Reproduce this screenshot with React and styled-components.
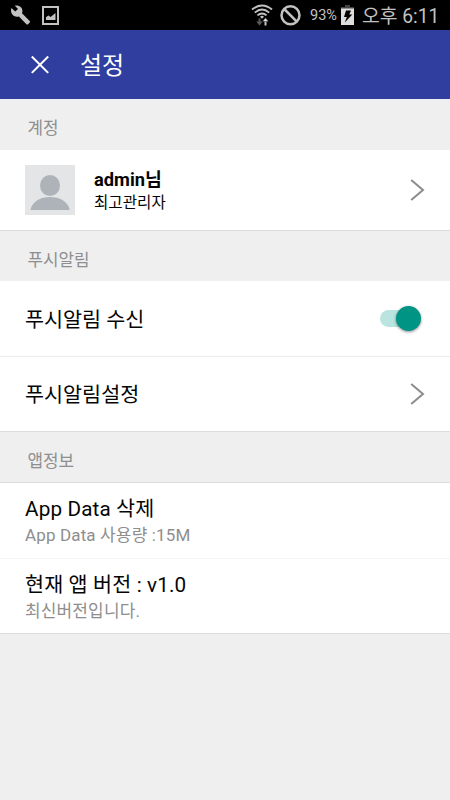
import React, { useState } from "react";
import styled, { createGlobalStyle, ThemeProvider } from "styled-components";

const theme = {
  primary: "#303f9f",
  accent: "#009485",
  accentLight: "#b9e4df",
  background: "#efefef",
  text: "#050505",
  muted: "#8e8e8e",
  status: "#c2c2c2"
};

const GlobalStyle = createGlobalStyle`
  * {
    box-sizing: border-box;
  }

  body {
    margin: 0;
    background: #efefef;
    font-family: Roboto, "Noto Sans CJK KR", sans-serif;
  }
`;

const Screen = styled.div`
  width: 450px;
  height: 800px;
  overflow: hidden;
  background: ${props => props.theme.background};
  color: ${props => props.theme.text};
`;

const StatusBar = styled.div`
  height: 30px;
  padding: 0 11px 0 10px;
  display: flex;
  align-items: center;
  justify-content: space-between;
  background: #000;
  color: ${props => props.theme.status};
`;

const StatusGroup = styled.div`
  height: 30px;
  display: flex;
  align-items: center;

  svg {
    display: block;
    flex: none;
  }
`;

const Notifications = styled(StatusGroup)`
  gap: 11px;
`;

const BlockedSlot = styled.div`
  margin-left: 7px;
`;

const Percent = styled.span`
  width: 28px;
  margin: 2px 3px 0 8px;
  font-size: 14.5px;
  line-height: 30px;
  white-space: nowrap;
`;

const Clock = styled.span`
  margin: 3px 0 0 8px;
  width: 77px;
  font-size: 19.3px;
  line-height: 30px;
  white-space: nowrap;
`;

const Toolbar = styled.header`
  height: 69px;
  padding-left: 31px;
  display: flex;
  align-items: center;
  background: ${props => props.theme.primary};
  color: #fff;
`;

const CloseButton = styled.button`
  padding: 0;
  border: 0;
  background: none;
  color: inherit;

  svg {
    display: block;
  }
`;

const Title = styled.h1`
  margin: 4px 0 0 31px;
  font-size: 24px;
  font-weight: 400;
  line-height: 69px;
`;

const SectionTitle = styled.h2`
  height: ${props => props.$height || 50}px;
  margin: 0;
  padding: 4px 0 0 27.5px;
  color: ${props => props.theme.muted};
  font-size: 16.9px;
  font-weight: 400;
  line-height: 50px;
`;

const List = styled.div`
  background: #fff;
  border-top: ${props => (props.$topLine ? "1px solid #dcdcdc" : "0")};
  border-bottom: 1px solid #dcdcdc;
`;

const Row = styled.div`
  height: ${props => props.$height || 75}px;
  padding: 0 25px;
  display: flex;
  align-items: center;
  border-top: ${props => (props.$divider ? `1px solid ${props.$divider}` : "0")};
`;

const Texts = styled.div`
  flex: 1;
  display: flex;
  flex-direction: column;
`;

const Label = styled.div`
  padding-top: ${props => (props.$spaced ? 1 : 2)}px;
  font-size: 20.7px;
  letter-spacing: ${props => (props.$spaced ? "0.14px" : "0")};
  line-height: 28px;
`;

const Description = styled.div`
  color: ${props => props.theme.muted};
  font-size: 17px;
  letter-spacing: 0.14px;
  line-height: 24px;
`;

const Avatar = styled.svg`
  display: block;
  margin-right: 19px;
`;

const UserName = styled.div`
  padding-top: 2px;
  font-size: 18.3px;
  font-weight: 700;
  line-height: 25px;
`;

const UserRole = styled.div`
  font-size: 15.6px;
  line-height: 23px;
`;

const Track = styled.button`
  width: 38px;
  height: 17px;
  margin-right: 7px;
  padding: 0;
  display: flex;
  align-items: center;
  justify-content: ${props => (props.$on ? "flex-end" : "flex-start")};
  border: 0;
  border-radius: 9px;
  background: ${props => (props.$on ? props.theme.accentLight : "#cfcfcf")};
`;

const Thumb = styled.span`
  width: 25px;
  height: 25px;
  flex: none;
  margin-right: -3px;
  border-radius: 50%;
  background: ${props => (props.$on ? props.theme.accent : "#fafafa")};
  box-shadow: 0 1px 3px rgba(0, 0, 0, 0.45);
`;

const ArrowIcon = styled.svg`
  display: block;
  fill: none;
  stroke: #8b8b8b;
  stroke-width: 2;
`;

function Arrow() {
  return (
    <ArrowIcon width="15" height="22" viewBox="0 0 15 22">
      <path d="M1.2 1L13 11 1.2 21" />
    </ArrowIcon>
  );
}

function WrenchIcon() {
  return (
    <svg width="21" height="20" viewBox="0 0 21 20" fill="currentColor">
      <path d="M1.5 3.1L5.2 6.5 8 3.9 4.7.6C7 .1 9.4.7 10.9 2.2c1.6 1.7 2 4 1.1 6.1l7.7 7.6c.5.5.5 1.2 0 1.7l-1.6 1.6c-.5.5-1.2.5-1.7 0L8.9 11.4c-2.2.8-4.5.3-6.1-1.3C1 8.2.5 5.4 1.5 3.1z" />
    </svg>
  );
}

function PictureIcon() {
  return (
    <svg width="18" height="19" viewBox="0 0 18 19">
      <rect x="1" y="1" width="15" height="17" fill="none" stroke="currentColor" strokeWidth="2" />
      <path d="M4 14v-2.8l2.3-1.8 2.300 1.500L13.500 7v7z" fill="currentColor" />
    </svg>
  );
}

function WifiIcon() {
  return (
    <svg width="22" height="23" viewBox="0 0 22 23" fill="none" stroke="currentColor">
      <path d="M1 5.5Q11-2.5 21 5.5M3.8 8.6Q11 2.4 18.2 8.6M6.4 11.4Q11 7.4 15.6 11.4" strokeWidth="1.9" />
      <path d="M9 12.7Q11 11 13 12.7L11 14.7z" fill="currentColor" stroke="none" />
      <path d="M8.5 14.5v4" stroke="#5a5a5a" strokeWidth="2" />
      <path d="M5.2 17.6h6.6L8.5 21.6z" fill="#5a5a5a" stroke="none" />
      <path d="M14.5 21.5v-5" strokeWidth="2" />
      <path d="M11.4 17.5l3.1-3.7 3.1 3.7z" fill="#e0e0e0" stroke="#000" strokeWidth="0.4" />
    </svg>
  );
}

function BlockedIcon() {
  return (
    <svg width="22" height="22" viewBox="0 0 22 22" fill="none" stroke="currentColor" strokeWidth="2.5">
      <circle cx="10.5" cy="11.3" r="9" />
      <path d="M4.2 5l12.6 12.6" />
    </svg>
  );
}

function BatteryIcon() {
  return (
    <svg width="13" height="20" viewBox="0 0 13 20">
      <path d="M4 0h5v2h4v2H0V2h4z" fill="#444" />
      <path d="M0 3.5h13V20H0z" fill="#dedede" />
      <path d="M5 5.5h5l-1.7 4h3l-7.5 8 2-5.500H3z" fill="#000" />
    </svg>
  );
}

function Status() {
  return (
    <StatusBar>
      <Notifications>
        <WrenchIcon />
        <PictureIcon />
      </Notifications>
      <StatusGroup>
        <WifiIcon />
        <BlockedSlot>
          <BlockedIcon />
        </BlockedSlot>
        <Percent>93%</Percent>
        <BatteryIcon />
        <Clock>오후 6:11</Clock>
      </StatusGroup>
    </StatusBar>
  );
}

export default function App() {
  const [push, setPush] = useState(true);

  return (
    <ThemeProvider theme={theme}>
      <GlobalStyle />
      <Screen>
        <Status />
        <Toolbar>
          <CloseButton aria-label="닫기">
            <svg width="18" height="18" viewBox="0 0 18 18" stroke="currentColor" strokeWidth="2">
              <path d="M.8.5l16.400 16.400M17.200.5L.8 16.900" />
            </svg>
          </CloseButton>
          <Title>설정</Title>
        </Toolbar>

        <SectionTitle $height={51}>계정</SectionTitle>
        <List>
          <Row $height={80}>
            <Avatar width="50" height="50" viewBox="0 0 50 50">
              <path d="M0 0h50v50H0z" fill="#e3e5e7" />
              <ellipse cx="25" cy="20.5" rx="10" ry="10.5" fill="#adb3b8" />
              <path d="M5.5 45C8 27.5 42 27.5 44.8 45z" fill="#adb3b8" />
            </Avatar>
            <Texts>
              <UserName>admin님</UserName>
              <UserRole>최고관리자</UserRole>
            </Texts>
            <Arrow />
          </Row>
        </List>

        <SectionTitle>푸시알림</SectionTitle>
        <List>
          <Row>
            <Texts>
              <Label>푸시알림 수신</Label>
            </Texts>
            <Track
              role="switch"
              aria-checked={push}
              aria-label="푸시알림 수신"
              $on={push}
              onClick={() => setPush(!push)}
            >
              <Thumb $on={push} />
            </Track>
          </Row>
          <Row $divider="#ececec">
            <Texts>
              <Label>푸시알림설정</Label>
            </Texts>
            <Arrow />
          </Row>
        </List>

        <SectionTitle>앱정보</SectionTitle>
        <List $topLine>
          <Row>
            <Texts>
              <Label $spaced>App Data 삭제</Label>
              <Description>App Data 사용량 :15M</Description>
            </Texts>
          </Row>
          <Row $divider="#f5f5f5">
            <Texts>
              <Label $spaced>현재 앱 버전 : v1.0</Label>
              <Description>최신버전입니다.</Description>
            </Texts>
          </Row>
        </List>
      </Screen>
    </ThemeProvider>
  );
}
